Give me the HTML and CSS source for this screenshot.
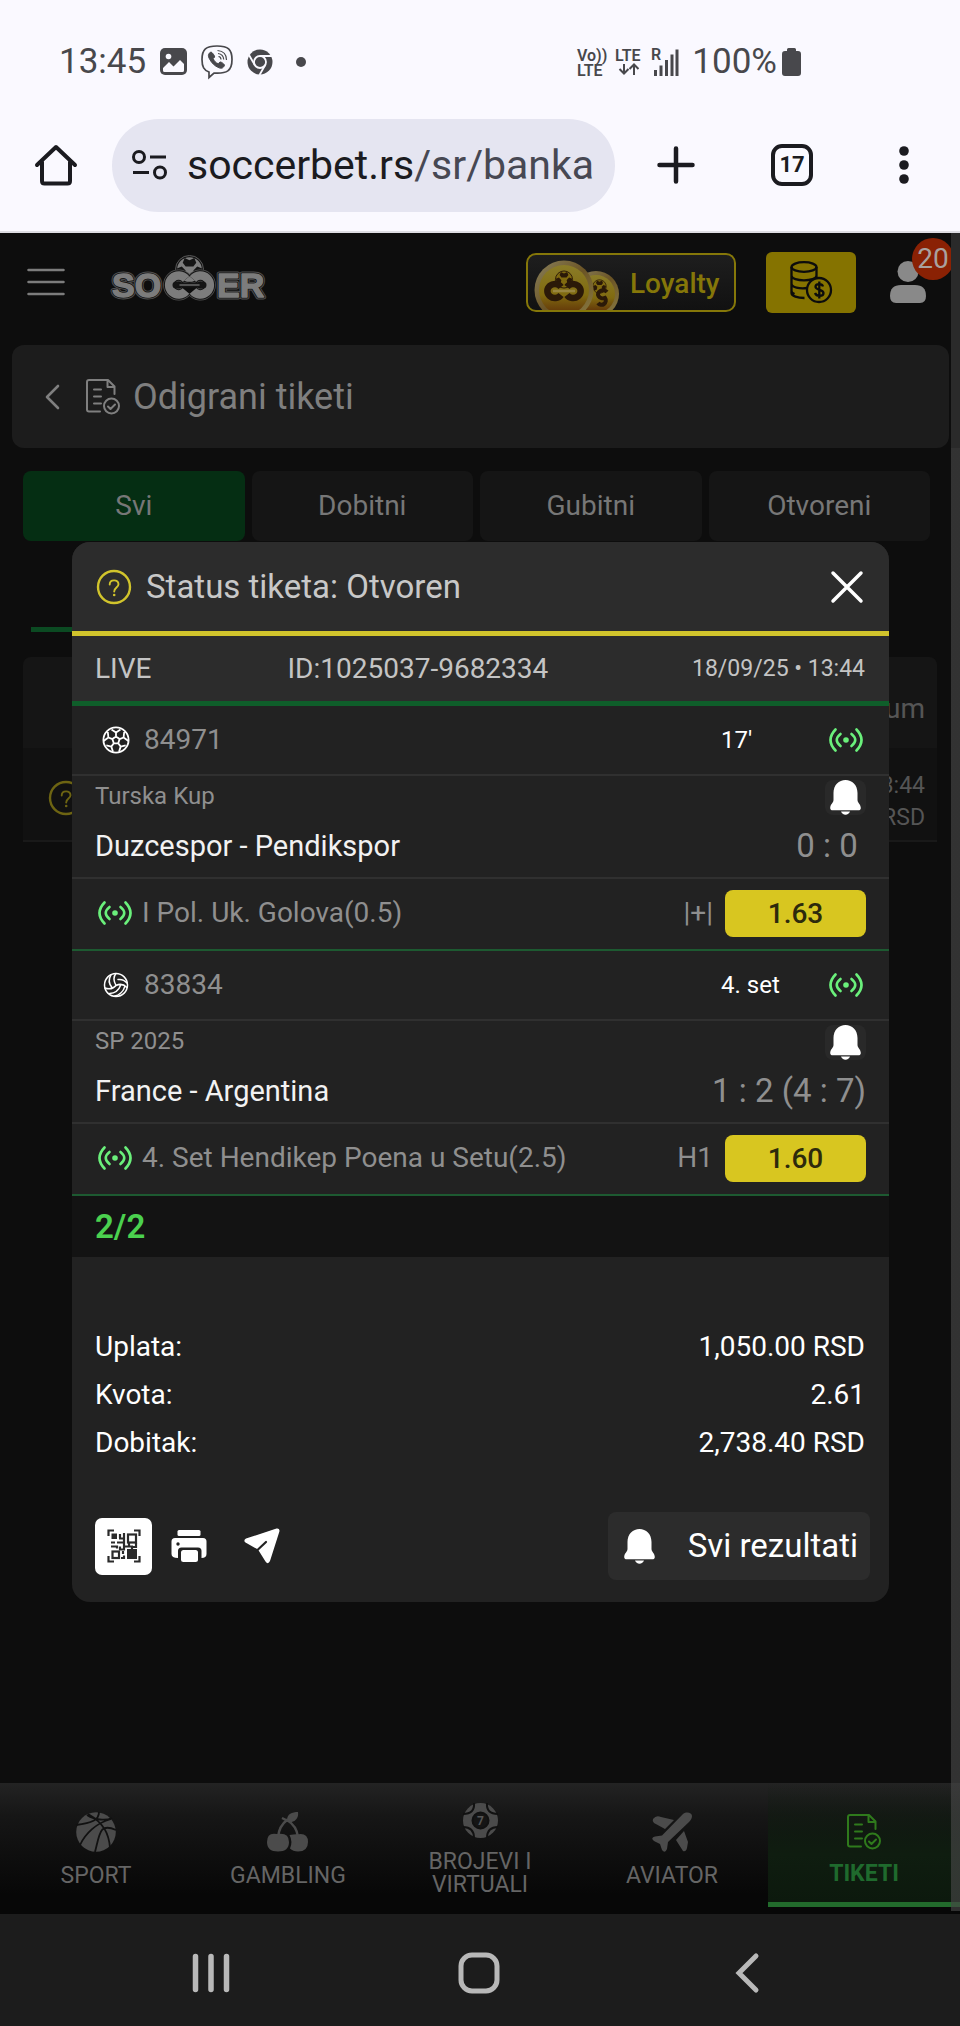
FILE: index.html
```html
<!DOCTYPE html>
<html lang="sr-Latn">
<head>
<meta charset="utf-8">
<meta name="viewport" content="width=device-width, initial-scale=1">
<title>Odigrani tiketi</title>
<link rel="stylesheet" href="styles.css">
</head>
<body>
<svg class="defs" width="0" height="0" aria-hidden="true">
  <symbol id="i-live" viewBox="0 0 34 24">
    <g fill="none" stroke="currentColor" stroke-width="2.6" stroke-linecap="round"><path d="M6.5 1.5Q-3.500 12 6.500 22.500M11.500 6Q4 12 11.500 18M27.500 1.500Q37.500 12 27.500 22.500M22.500 6Q30 12 22.500 18"/></g>
    <circle cx="17" cy="12" r="2.800" fill="currentColor"/>
  </symbol>
  <symbol id="i-bell" viewBox="0 0 31 35">
    <path fill="currentColor" d="M3.500 13C3.500 5 9 0 15.500 0S27.500 5 27.500 13v7c0 3 3.300 4 3.300 8 0 1.500-1 2.300-2.500 2.300H2.700C1.200 30.300.2 29.500.2 28c0-4 3.300-5 3.300-8zM11 31.600h9c-.6 2-2.500 3.200-4.500 3.200s-3.900-1.200-4.500-3.200z"/>
  </symbol>
  <symbol id="i-question" viewBox="0 0 36 36">
    <circle cx="18" cy="18" r="16" fill="none" stroke="currentColor" stroke-width="2.400"/>
    <path d="M13.700 15.500c0-5.500 8.800-5.500 8.800-.3 0 3.300-4.300 3.500-4.300 7.300" fill="none" stroke="currentColor" stroke-width="1.900" stroke-linecap="round"/>
    <circle cx="18.200" cy="26" r="1.300" fill="currentColor"/>
  </symbol>
  <symbol id="i-ticket" viewBox="0 0 36 36">
    <g fill="none" stroke="currentColor" stroke-width="2" stroke-linecap="round" stroke-linejoin="round">
      <path d="M15 32.500H4A2 2 0 0 1 2 30.500V3A2 2 0 0 1 4 1H23l6.500 6.500V15M22.500 1.500V8h6.500M9 10.500h7M9 17.500h7M9 24.500h7"/>
      <circle cx="26.500" cy="27" r="7.500"/><path d="M23 27.500l2.500 2.500 4.500-4.500"/>
    </g>
  </symbol>
  <symbol id="i-football" viewBox="0 0 28 28">
    <g fill="none" stroke="currentColor" stroke-width="1.800" stroke-linejoin="round">
      <circle cx="14" cy="14" r="12.600"/>
      <path d="M14 10.500l3.600 2.600-1.400 4.200h-4.400l-1.400-4.200zM14 10.500V6.500M17.600 13.100l4-1.600M16.200 17.300l2.500 3.300M11.800 17.300l-2.500 3.300M10.400 13.100l-4-1.600M14 6.500l-4.500-3 M14 6.500l4.500-3M21.600 11.500l.6-5.500M21.600 11.500l4.800 3.500M18.700 20.600l5-1.200M18.700 20.600l-1.700 5.200M9.300 20.600l-5-1.200M9.300 20.600l1.700 5.200M6.400 11.500l-.6-5.500M6.400 11.500l-4.800 3.500"/>
    </g>
  </symbol>
  <symbol id="i-volley" viewBox="0 0 28 28">
    <g fill="none" stroke="currentColor" stroke-width="1.500" stroke-linecap="round">
      <circle cx="14" cy="14" r="11.500"/>
      <path d="M14 14.500C11.500 10 11.500 5.500 14 2.600M14 14.500C18 12.500 22 13.500 25 16.500M14 14.500C11.500 17.500 7 18.500 2.800 17M10 16.500C6.500 12.500 6.500 8 9 3.800M16 8.500c3.500-.5 6.500.5 9 3.500M7.500 22.500C12.500 22.500 17 19 19 13.600M12 25.200C17 24.500 21.500 20.500 23 15"/>
    </g>
  </symbol>
  <symbol id="i-ball" viewBox="0 0 30 30">
    <circle cx="15" cy="15" r="13.500" fill="var(--ball)" stroke="currentColor" stroke-width="1.500"/>
    <path fill="currentColor" d="M10 3l5 2.500L20 3l2 5-3 4h-8L8 8zM2 14l5-2 4 4-2 6-5 1zM28 14l-5-2-4 4 2 6 5 1z"/>
    <path fill="var(--ball)" d="M15 14l4.500 3.200-1.700 5.300h-5.600l-1.700-5.300z"/>
  </symbol>
</svg>

<header class="statusbar">
  <div class="status-left">
    <time>13:45</time>
    <svg width="27" height="27" viewBox="0 0 27 27" aria-hidden="true"><rect width="27" height="27" rx="5" fill="#48484c"/><circle cx="8.500" cy="8.500" r="2.800" fill="#faf9ff"/><path d="M3 20l6-6 4.500 4.500L20 12l4 4v6.500a1.500 1.500 0 0 1-1.500 1.500H4.500A1.500 1.500 0 0 1 3 22.500z" fill="#faf9ff"/></svg>
    <svg width="32" height="34" viewBox="0 0 32 34" fill="none" stroke="#48484c" aria-hidden="true"><path stroke-width="1.700" d="M16 1C5 1 1 4 1 14.500 1 22 3 25 8 27v5.500l5-4.500c13 .8 18-2 18-13.500C31 4 27 1 16 1z"/><path d="M10 7C7 8.500 7 10.500 8 13c2.500 5 5.500 8 10 9.800 2.500 1 4 .5 5.500-2.300.5-1-3.500-4-4.500-3.500l-1.800 1.700C15 18 13 16 12.200 13.500L13.700 12C14 11 11 7 10 7z" fill="#48484c"/><path stroke-width="1.200" d="M16.500 5.500c6 .5 9 4 9 9.500M17 8.500c4 .5 5.500 2.500 5.700 6M17.500 11.500c1.800.2 2.500 1 2.500 3"/></svg>
    <svg width="26" height="26" viewBox="0 0 26 26" aria-hidden="true"><circle cx="13" cy="13" r="12.500" fill="#48484c"/><circle cx="13" cy="13" r="6" fill="#48484c" stroke="#faf9ff" stroke-width="1.800"/><path stroke="#faf9ff" stroke-width="1.800" d="M13 7h12M7.800 16L2 6M18.200 16L12.500 26"/></svg>
    <span class="dot"></span>
  </div>
  <div class="status-right">
    <svg width="102" height="30" viewBox="0 0 102 30" fill="#48484c" aria-hidden="true">
      <g font-family="Roboto, sans-serif" font-weight="600" font-size="16"><text x="0" y="14">Vo))</text><text x="0" y="29">LTE</text><text x="38" y="14">LTE</text><text x="74" y="13">R</text></g>
      <path d="M47 17v9M42.500 22l4.500 4.500 4.500-4.500M57 28V18M52.500 22l4.500-4.500 4.500 4.500" fill="none" stroke="#48484c" stroke-width="2"/>
      <path d="M77 23h3v6h-3zM82.500 18.500h3V29h-3zM88 13h3v16h-3zM93.500 7.500h3V29h-3zM98.500 2.500h3V29h-3z"/>
    </svg>
    <span>100%</span>
    <svg width="19" height="28" viewBox="0 0 19 28" fill="#48484c" aria-hidden="true"><path d="M5 1.500Q5 0 6.500 0h6Q14 0 14 1.500V3h2q3 0 3 3v19q0 3-3 3H3q-3 0-3-3V6q0-3 3-3h2z"/></svg>
  </div>
</header>

<div class="browserbar">
  <button class="bb-btn" aria-label="Home"><svg width="42" height="42" viewBox="0 0 42 42" fill="none" stroke="#1b1b20" stroke-width="4" stroke-linejoin="round" stroke-linecap="round"><path d="M2 21L21 3l19 18M7 18v19q0 2.500 2.500 2.500h23Q35 39.500 35 37V18"/></svg></button>
  <div class="urlpill">
    <svg width="35" height="30" viewBox="0 0 35 30" fill="none" stroke="#1b1b20" stroke-width="3" aria-hidden="true"><circle cx="7" cy="7" r="5.500"/><circle cx="28" cy="22.500" r="5.500"/><path d="M18 7h16M1 22.500h16"/></svg>
    <span class="url">soccerbet.rs<span class="url-path">/sr/banka</span></span>
  </div>
  <button class="bb-btn bb-new" aria-label="New tab"><svg width="38" height="38" viewBox="0 0 38 38" stroke="#1b1b20" stroke-width="4.500" stroke-linecap="round"><path d="M19 2.500v33M2.500 19h33"/></svg></button>
  <button class="bb-btn bb-tabs" aria-label="Tabs">17</button>
  <button class="bb-btn bb-more" aria-label="More"><svg width="10" height="38" viewBox="0 0 10 38" fill="#1b1b20"><circle cx="5" cy="5" r="4.800"/><circle cx="5" cy="19" r="4.800"/><circle cx="5" cy="33" r="4.800"/></svg></button>
</div>

<div class="site">
  <header class="topbar">
    <button class="plain" aria-label="Meni"><svg width="38" height="28" viewBox="0 0 38 28" stroke="#7c7c7c" stroke-width="2.500" stroke-linecap="round"><path d="M1.500 2h35M1.500 14h35M1.500 26h35"/></svg></button>
    <a class="logo" href="#" aria-label="Soccer">
      <svg width="158" height="46" viewBox="0 0 158 46">
        <defs>
          <g id="word"><text x="2" y="42">SO</text><text x="107" y="42">ER</text></g>
        </defs>
        <svg x="65" y="0" width="29" height="29" style="--ball:#7e7e7e" color="#151515"><use href="#i-ball"/></svg>
        <circle cx="79.500" cy="14.500" r="14" fill="none" stroke="#5a5a5a"/>
        <g font-family="Liberation Sans, sans-serif" font-weight="700" font-size="34" stroke-linejoin="round">
          <use href="#word" fill="#505050" stroke="#505050" stroke-width="5"/>
          <use href="#word" fill="#151515" stroke="#151515" stroke-width="3.200"/>
          <use href="#word" fill="#7c7c7c" stroke="#7c7c7c" stroke-width="1.400"/>
        </g>
        <g fill="none">
          <path d="M76 24a9.500 9.500 0 1 0 0 12M83 24a9.500 9.500 0 1 1 0 12" stroke="#505050" stroke-width="12"/>
          <path d="M76 24a9.500 9.500 0 1 0 0 12M83 24a9.500 9.500 0 1 1 0 12" stroke="#151515" stroke-width="10.500"/>
          <path d="M76 24a9.500 9.500 0 1 0 0 12M83 24a9.500 9.500 0 1 1 0 12" stroke="#7c7c7c" stroke-width="8.500"/>
          <path d="M67 30h26" stroke="#151515" stroke-width="5"/><path d="M67 30h26" stroke="#7c7c7c" stroke-width="1.200"/>
          <circle cx="66" cy="30" r="3.500" fill="#151515"/><circle cx="93" cy="30" r="3.500" fill="#151515"/>
        </g>
      </svg>
    </a>
    <a class="loyalty" href="#">
      <svg width="88" height="52" viewBox="0 0 88 52" aria-hidden="true">
        <defs>
          <linearGradient id="rim" x1="0" y1="0" x2="1" y2="1"><stop offset="0" stop-color="#8a815c"/><stop offset=".5" stop-color="#6b5425"/><stop offset="1" stop-color="#8b7d45"/></linearGradient>
          <linearGradient id="face" x1="0" y1="0" x2="0" y2="1"><stop offset="0" stop-color="#8a7c28"/><stop offset=".6" stop-color="#806a10"/><stop offset="1" stop-color="#5e2f08"/></linearGradient>
        </defs>
        <circle cx="62" cy="38" r="23" fill="url(#rim)"/><circle cx="62" cy="38" r="19" fill="url(#face)"/>
        <svg x="58" y="23" width="15" height="15" style="--ball:#806a10" color="#2b1908"><use href="#i-ball"/></svg>
        <path d="M73 36a5 4 0 1 0-2 6a4 4 0 1 1-7 5" fill="none" stroke="#2b1908" stroke-width="4"/>
        <circle cx="30" cy="34" r="29.500" fill="url(#rim)"/><circle cx="30" cy="34" r="25" fill="url(#face)"/>
        <svg x="20.500" y="14" width="19" height="19" style="--ball:#806a10" color="#2b1908"><use href="#i-ball"/></svg>
        <path d="M27 31a7.500 7 0 1 0 0 8M33 31a7.500 7 0 1 1 0 8" fill="none" stroke="#2b1908" stroke-width="6.500"/>
        <path d="M19 35h22" stroke="#988540" stroke-width="2.500"/>
      </svg>
      <span>Loyalty</span>
    </a>
    <button class="deposit" aria-label="Uplata"><svg width="42" height="42" viewBox="0 0 42 42" fill="none" stroke="#0c0c0c" stroke-width="2.300"><ellipse cx="14" cy="6" rx="12.500" ry="4.800"/><path d="M1.500 6v26c0 3 6 5 13 5M26.500 6v10M1.500 14.500c0 6.500 25 6.500 25 0M1.500 22.500c0 4 8 5.500 16 4.500M1.500 30c0 1 1 2 3 3"/><circle cx="29" cy="29" r="12" fill="#857300"/><path d="M33 25.500c-1-3.500-7.500-3-7.500.3 0 3.500 8 2.500 8 6.200 0 3.500-7 4-8.500 0M29.300 20.500v17"/></svg></button>
    <button class="plain user" aria-label="Profil, 20 poruka">
      <svg width="38" height="42" viewBox="0 0 38 42" fill="#898989"><circle cx="19" cy="10.500" r="10.500"/><path d="M1 35q0-11 11-11h14q11 0 11 11 0 7-6 7H7q-6 0-6-7z"/></svg>
      <span class="badge">20</span>
    </button>
  </header>

  <main>
    <div class="titlebar">
      <button class="plain" aria-label="Nazad"><svg width="16" height="26" viewBox="0 0 16 26" fill="none" stroke="#7f7f7f" stroke-width="2.600" stroke-linecap="round" stroke-linejoin="round"><path d="M14 2L3 13l11 11"/></svg></button>
      <svg class="title-icon" width="36" height="36" aria-hidden="true"><use href="#i-ticket"/></svg>
      <h1>Odigrani tiketi</h1>
    </div>
    <div class="filters">
      <button class="filter on">Svi</button>
      <button class="filter">Dobitni</button>
      <button class="filter">Gubitni</button>
      <button class="filter">Otvoreni</button>
    </div>
    <div class="underline"></div>
    <table class="tickets">
      <thead><tr><th></th><th>Datum</th></tr></thead>
      <tbody><tr><td><svg width="36" height="36" aria-hidden="true"><use href="#i-question"/></svg></td><td>13:44<br>RSD</td></tr></tbody>
    </table>
  </main>

  <section class="modal" role="dialog" aria-labelledby="status-title">
    <header class="modal-head">
      <svg width="36" height="36" aria-hidden="true"><use href="#i-question"/></svg>
      <h2 id="status-title">Status tiketa: Otvoren</h2>
      <button class="plain" aria-label="Zatvori"><svg width="32" height="32" viewBox="0 0 32 32" stroke="#fff" stroke-width="3.500" stroke-linecap="round"><path d="M2 2l28 28M30 2L2 30"/></svg></button>
    </header>
    <div class="meta"><span>LIVE</span><span>ID:1025037-9682334</span><time>18/09/25 • 13:44</time></div>

    <article class="bet">
      <div class="bet-code">
        <svg width="28" height="28" aria-hidden="true"><use href="#i-football"/></svg><span class="code">84971</span><span class="clock">17'</span>
        <span class="live-box"><svg class="live" width="34" height="24"><use href="#i-live"/></svg></span>
      </div>
      <div class="bet-match">
        <span class="league">Turska Kup</span>
        <button class="bell" aria-label="Obaveštenja"><svg width="31" height="35"><use href="#i-bell"/></svg></button>
        <span class="teams">Duzcespor - Pendikspor</span>
        <span class="score">0 : 0&nbsp;</span>
      </div>
      <div class="bet-pick">
        <svg class="live" width="34" height="24"><use href="#i-live"/></svg>
        <span class="market">I Pol. Uk. Golova(0.5)</span><span>|+|</span><span class="odd">1.63</span>
      </div>
    </article>

    <article class="bet">
      <div class="bet-code">
        <svg width="28" height="28" aria-hidden="true"><use href="#i-volley"/></svg><span class="code">83834</span><span class="clock">4. set</span>
        <span class="live-box"><svg class="live" width="34" height="24"><use href="#i-live"/></svg></span>
      </div>
      <div class="bet-match">
        <span class="league">SP 2025</span>
        <button class="bell" aria-label="Obaveštenja"><svg width="31" height="35"><use href="#i-bell"/></svg></button>
        <span class="teams">France - Argentina</span>
        <span class="score">1 : 2 (4 : 7)</span>
      </div>
      <div class="bet-pick">
        <svg class="live" width="34" height="24"><use href="#i-live"/></svg>
        <span class="market">4. Set Hendikep Poena u Setu(2.5)</span><span>H1</span><span class="odd">1.60</span>
      </div>
    </article>

    <div class="count">2/2</div>
    <dl class="summary">
      <div><dt>Uplata:</dt><dd>1,050.00 RSD</dd></div>
      <div><dt>Kvota:</dt><dd>2.61</dd></div>
      <div><dt>Dobitak:</dt><dd>2,738.40 RSD</dd></div>
    </dl>
    <footer class="actions">
      <button class="qr" aria-label="QR kod"><svg width="34" height="34" viewBox="0 0 34 34" fill="none" stroke="#2a2a2a" stroke-width="2.200"><path d="M1.500 7V1.500H7M27 1.500h5.500V7M1.500 27v5.500H7M27 32.500h5.500V27"/><rect x="21" y="5.500" width="8" height="8"/><rect x="5.500" y="22.500" width="6.500" height="6.500"/><rect x="4.500" y="4.500" width="5.500" height="5.500" fill="#2a2a2a" stroke="none"/><rect x="20" y="20" width="10" height="10" fill="#2a2a2a" stroke="none"/><path d="M13 5v4M17 4v9M12 9.500h5M4 13.500h4M10 13.500h7v4M4 17.500h6v2M13 17.500v3h4v-3h8v3M16 22v3M14 29h3v-2.500M22 17v-3M29 14v4h-4"/></svg></button>
      <button class="act" aria-label="Štampaj"><svg width="36" height="32" viewBox="0 0 36 32" fill="#fff"><rect x="6.500" width="23" height="6" rx="1.500"/><path d="M4 8h28q3.500 0 3.500 3.500V24q0 4-5 4V21q0-3.500-3.500-3.500H10.500Q7 17.500 7 21v7Q.5 28 .5 24V11.500Q.5 8 4 8z"/><rect x="10" y="20" width="17" height="12" rx="2.500"/><circle cx="7" cy="14" r="1.700" fill="#222"/></svg></button>
      <button class="act" aria-label="Pošalji"><svg width="36" height="36" viewBox="0 0 36 36"><path fill="#fff" d="M32.500.500Q36 0 35.400 3.500L26 33q-2 4-4.500.500L14 21.500 1.500 14.500q-2.500-2 .500-4z"/><path d="M14 21.500l8-7.500" stroke="#222" stroke-width="2.200" stroke-linecap="round"/></svg></button>
      <button class="results"><svg width="31" height="35" aria-hidden="true"><use href="#i-bell"/></svg>Svi rezultati</button>
    </footer>
  </section>

  <nav class="bottomnav">
    <a href="#"><svg width="40" height="40" viewBox="0 0 40 40"><circle cx="20" cy="20" r="19.800" fill="#4b4b4b"/><path d="M11 3C18 8 30 9 36 6M0 13C16 11 23 8 23 0M4 33C9 22 20 11 35 7M19 40C24 20 24 11 40 18M34 36C33 22 28 11 12 2" fill="none" stroke="#111" stroke-width="1.800"/></svg><span>SPORT</span></a>
    <a href="#"><svg width="42" height="40" viewBox="0 0 42 40"><path d="M11 25C12 16 16 11 20 8c5 3 10 9 11 17M15 6l6 3" fill="none" stroke="#4b4b4b" stroke-width="2.500"/><path d="M20 8C20 2 25 0 31 0c1 6-3 11-10 10z" fill="#4b4b4b"/><path d="M10 22q12-2 12 8 0 9.500-11 9.500T0 30q0-10 10-8z" fill="#4b4b4b"/><path d="M22.500 23q7-1 7-.500Q41 20 41 30q0 9.500-10 9.500-5 0-8-3 3-7-.500-13.500z" fill="#4b4b4b"/></svg><span>GAMBLING</span></a>
    <a href="#"><svg width="35" height="35" viewBox="0 0 35 35"><circle cx="17.500" cy="17.500" r="17.500" fill="#4b4b4b"/><g fill="none" stroke="#111" stroke-width="2"><circle cx="17.500" cy="17.500" r="8" fill="#151515"/><path d="M11 0q1 11-11 11M24 0q-1 11 11 11M0 24q11 0 11 11M35 24q-11 0-11 11"/></g><text x="14" y="22" font-family="Roboto, sans-serif" font-weight="700" font-size="12" fill="#555">7</text></svg><span>BROJEVI I VIRTUALI</span></a>
    <a href="#"><svg width="40" height="40" viewBox="0 0 40 40" fill="#4b4b4b"><path d="M31 2c4-3 9-1 9 2 0 2-1 4-3 6L16 30l-1 7q-2 5-5 1l-2-6-6-3q-4-3 1-4.500l7-1z"/><path d="M1 7q3-4 8-2l13 3-9 9L2 11q-2-2-1-4zM32 19l-8 9 7 11q3 1 4-3l1-6z"/></svg><span>AVIATOR</span></a>
    <a href="#" class="active"><svg width="36" height="36" viewBox="0 0 36 36"><use href="#i-ticket"/></svg><span>TIKETI</span></a>
  </nav>
  <div class="scrollbar"></div>
</div>

<nav class="sysnav">
  <button class="plain" aria-label="Recents"><svg width="38" height="40" viewBox="0 0 38 40" stroke="#b8b8b8" stroke-width="5.500" stroke-linecap="round"><path d="M3.500 3.500v33M19 3.500v33M34.500 3.500v33"/></svg></button>
  <button class="plain" aria-label="Home"><svg width="42" height="42" viewBox="0 0 42 42" fill="none" stroke="#b8b8b8" stroke-width="5"><rect x="3" y="3" width="36" height="36" rx="11"/></svg></button>
  <button class="plain" aria-label="Back"><svg width="24" height="40" viewBox="0 0 24 40" fill="none" stroke="#b8b8b8" stroke-width="5" stroke-linecap="round"><path d="M21 3L4 20l17 17"/></svg></button>
</nav>
</body>
</html>
```
FILE: styles.css
```css
* { box-sizing: border-box; }

body {
  margin: 0;
  min-height: 100vh;
  display: flex;
  flex-direction: column;
  font-family: Roboto, "Noto Sans", sans-serif;
  font-size: 28px;
  line-height: 32px;
  color: #fff;
  background: #0d0d0d;
}

h1, h2, dl, dd { margin: 0; font-weight: 400; }
button { font: inherit; color: inherit; border: 0; padding: 0; background: none; }
a { color: inherit; text-decoration: none; }
svg { display: block; flex: none; overflow: visible; }
.defs { position: absolute; }
.plain { display: flex; }

/* Phone status bar */
.statusbar {
  display: flex;
  justify-content: space-between;
  align-items: center;
  height: 119px;
  padding: 4px 159px 0 59px;
  background: #faf9ff;
  color: #48484c;
  font-size: 35px;
}
.status-left, .status-right { display: flex; align-items: center; }
.status-left { gap: 14px; }
.status-right span { margin: 0 5px 0 13px; }
.dot { width: 10px; height: 10px; margin-left: 9px; border-radius: 50%; background: #48484c; }

/* Browser toolbar */
.browserbar {
  display: flex;
  align-items: center;
  height: 114px;
  padding: 0 51px 20px 35px;
  background: #faf9ff;
  border-bottom: 2px solid #dddce2;
  color: #1b1b20;
}
.bb-btn { display: flex; flex: none; align-items: center; justify-content: center; }
.urlpill {
  flex: 1;
  min-width: 0;
  display: flex;
  align-items: center;
  gap: 20px;
  height: 93px;
  margin: 0 42px 0 35px;
  padding: 0 0 0 20px;
  border-radius: 47px;
  background: #e5e5f1;
}
.url { font-size: 41px; line-height: 50px; white-space: nowrap; }
.url-path { color: #474853; }
.bb-new { margin-right: 76px; }
.bb-tabs {
  width: 42px;
  height: 42px;
  margin-right: 86px;
  border: 4px solid #1b1b20;
  border-radius: 11px;
  font-size: 22px;
  font-weight: 700;
}

/* Site shell */
.site {
  position: relative;
  flex: 1;
  display: flex;
  flex-direction: column;
  background: #0d0d0d;
}
.topbar {
  display: flex;
  align-items: center;
  height: 98px;
  padding: 0 33px 0 27px;
}
.logo { margin: 0 auto 8px 45px; }
.loyalty {
  display: flex;
  align-items: center;
  width: 210px;
  height: 59px;
  padding-left: 6px;
  gap: 8px;
  overflow: hidden;
  border: 2px solid #857709;
  border-radius: 10px;
  background: linear-gradient(#1e1e1e, #111);
  color: #857709;
  font-weight: 500;
}
.loyalty span { padding-top: 4px; }
.deposit {
  display: flex;
  align-items: center;
  justify-content: center;
  width: 90px;
  height: 61px;
  margin: 0 33px 0 30px;
  border-radius: 6px;
  background: #857300;
}
.user { position: relative; }
.badge {
  position: absolute;
  left: 23px;
  top: -23px;
  width: 42px;
  height: 42px;
  border-radius: 50%;
  background: #8a2104;
  color: #a9a19f;
  line-height: 42px;
  text-align: center;
}
main { flex: 1; padding: 14px 11px 0 12px; }
.titlebar {
  display: flex;
  align-items: center;
  height: 103px;
  padding-left: 32px;
  border-radius: 12px;
  background: #1c1c1c;
  color: #7f7f7f;
}
.title-icon { margin: 0 12px 0 25px; }
h1 { font-size: 36px; line-height: 42px; }
.filters {
  display: grid;
  grid-template-columns: repeat(4, 1fr);
  gap: 7px;
  margin: 23px 19px 0 11px;
}
.filter {
  height: 70px;
  border-radius: 8px;
  background: #151515;
  color: #777;
}
.filter.on { background: #052e13; }
.underline { height: 5px; margin: 86px 50% 25px 19px; background: #0b4a22; }
.tickets {
  width: calc(100% - 23px);
  margin-left: 11px;
  border-collapse: separate;
  border-spacing: 0;
  border-bottom: 2px solid #191919;
  color: #555;
}
.tickets th {
  height: 91px;
  padding: 12px 12px 0 0;
  background: #151515;
  font-weight: 400;
  text-align: right;
}
.tickets th:first-child { border-top-left-radius: 8px; }
.tickets th:last-child { border-top-right-radius: 8px; }
.tickets td { height: 92px; padding: 8px 12px 0 25px; background: #111; }
.tickets td:last-child { padding-top: 15px; font-size: 23px; text-align: right; }
.tickets svg { color: #6d6412; }

/* Ticket dialog */
.modal {
  position: absolute;
  top: 309px;
  left: 72px;
  right: 71px;
  overflow: hidden;
  border-radius: 18px;
  background: #222;
}
.modal-head {
  display: flex;
  align-items: center;
  gap: 14px;
  height: 94px;
  padding: 0 26px 0 24px;
  background: #2c2c2c;
  border-bottom: 5px solid #d1c42c;
  color: #c8c8c8;
}
.modal-head > svg { color: #d1c42c; }
.modal-head button { margin-left: auto; }
h2 { font-size: 33px; line-height: 38px; }
.meta {
  display: grid;
  grid-template-columns: 1fr 2fr 1fr;
  align-items: center;
  height: 70px;
  padding: 0 24px 0 23px;
  background: #2c2c2c;
  border-bottom: 5px solid #0f5e2a;
  color: #c4c4c4;
}
.meta time { font-size: 23px; text-align: right; white-space: nowrap; }
.bet { color: #8f8f8f; border-bottom: 2px solid #1d5a31; }
.bet-code {
  display: flex;
  align-items: center;
  height: 70px;
  padding: 0 23px 0 30px;
  border-bottom: 2px solid #303030;
}
.bet-code > svg { color: #fff; }
.code { flex: 1; padding-left: 14px; }
.clock { width: 104px; color: #fff; font-size: 24px; }
.live { color: #6af07b; }
.live-box { display: flex; justify-content: center; width: 41px; }
.bet-match {
  display: grid;
  grid-template-columns: 1fr auto;
  grid-template-rows: 39px 1fr;
  align-items: center;
  height: 103px;
  padding: 0 23px;
  border-bottom: 2px solid #303030;
}
.league { font-size: 24px; }
.bell {
  display: flex;
  justify-content: center;
  justify-self: end;
  width: 41px;
  height: 35px;
  margin-top: 4px;
  border-radius: 8px;
  background: #292929;
  color: #fff;
}
.teams { color: #f2f2f2; font-size: 29px; }
.score { font-size: 33px; text-align: right; }
.bet-pick {
  display: flex;
  align-items: center;
  gap: 12px;
  height: 70px;
  padding: 0 23px 2px 26px;
}
.bet-pick .market { flex: 1; margin-left: -2px; }
.odd {
  width: 141px;
  height: 47px;
  border-radius: 8px;
  background: #d8c620;
  color: #2d2a0c;
  font-weight: 500;
  line-height: 47px;
  text-align: center;
}
.count {
  height: 61px;
  padding: 0 23px;
  background: #131313;
  color: #4bd14f;
  font-size: 33px;
  font-weight: 600;
  line-height: 61px;
}
.summary { padding: 66px 24px 45px 23px; }
.summary div { display: flex; justify-content: space-between; line-height: 48px; }
.actions {
  display: flex;
  align-items: center;
  gap: 1px;
  padding: 0 19px 22px 23px;
}
.qr {
  display: flex;
  align-items: center;
  justify-content: center;
  width: 57px;
  height: 57px;
  border-radius: 7px;
  background: #fff;
}
.act { display: flex; align-items: center; justify-content: center; width: 72px; height: 57px; }
.results {
  display: flex;
  align-items: center;
  gap: 33px;
  height: 68px;
  margin-left: auto;
  padding: 0 12px 0 16px;
  border-radius: 8px;
  background: #2c2c2c;
  font-size: 33px;
}

/* Bottom navigation */
.bottomnav {
  display: grid;
  grid-template-columns: repeat(5, 1fr);
  height: 131px;
  padding-bottom: 7px;
  background: linear-gradient(#232323, #161616 25%, #070707 85%);
  color: #656565;
  font-size: 23px;
  line-height: 23px;
  text-align: center;
}
.bottomnav a {
  display: flex;
  flex-direction: column;
  align-items: center;
  justify-content: center;
  gap: 12px;
  padding: 9px 16px 0;
}
.bottomnav .active {
  padding-top: 14px;
  border-bottom: 5px solid #226b2c;
  background: linear-gradient(rgba(20, 60, 20, 0), #0f1d10 60%, #0c190d);
  color: #1f6a2d;
  font-weight: 700;
}
.bottomnav .active svg { color: #2f7a1c; }
.scrollbar {
  position: absolute;
  top: 0;
  right: 0;
  bottom: 3px;
  width: 9px;
  background: linear-gradient(#2a2a2a 215px, rgba(70, 70, 70, .65) 215px);
}

/* Phone navigation keys */
.sysnav {
  display: flex;
  align-items: center;
  justify-content: space-between;
  height: 112px;
  padding: 6px 192px 0 190px;
  background: #1c1c1c;
}
.sysnav button { justify-content: center; width: 42px; }
```
